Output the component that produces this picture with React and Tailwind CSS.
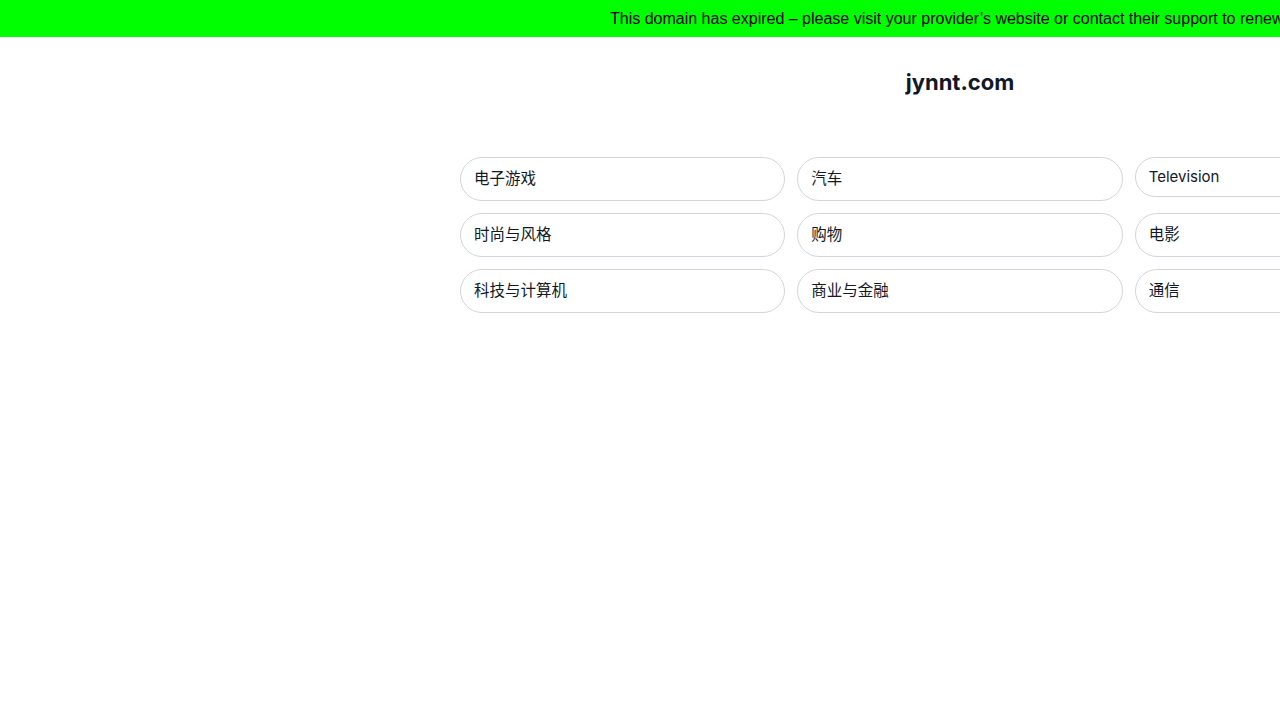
export default function App() {
  const topics = [
    ["电子游戏", false],
    ["汽车", false],
    ["Television", true],
    ["时尚与风格", false],
    ["购物", false],
    ["电影", false],
    ["科技与计算机", false],
    ["商业与金融", false],
    ["通信", false],
  ];
  return (
    <div className="w-full min-h-[720px] overflow-hidden bg-white">
      <div className="h-[37px] w-full bg-[#00ff00] overflow-hidden whitespace-nowrap flex items-center pl-[610px]">
        <span
          className="text-[16px] text-black"
          style={{ fontFamily: '"Liberation Sans", Arial, sans-serif' }}
        >
          This domain has expired – please visit your provider’s website or contact their support to renew it.
        </span>
      </div>
      <div
        className="w-[1920px] flex flex-col items-center"
        style={{ fontFamily: 'Inter, "Noto Sans CJK SC", sans-serif' }}
      >
        <h1 className="mt-[31px] text-[22px] leading-[28px] font-bold text-[#111827]">jynnt.com</h1>
        <div className="mt-[61px] w-[1000px] grid grid-cols-3 gap-x-[12px] gap-y-[12px] items-start">
          {topics.map(([label, latin]) => (
            <div
              key={label}
              className={`border border-[#d1d5db] rounded-[22px] px-[13px] flex items-center text-[#111827] ${latin ? "h-[40px] text-[15px]" : "h-[44px] text-[15.5px]"}`}
            >
              {label}
            </div>
          ))}
        </div>
      </div>
    </div>
  );
}
